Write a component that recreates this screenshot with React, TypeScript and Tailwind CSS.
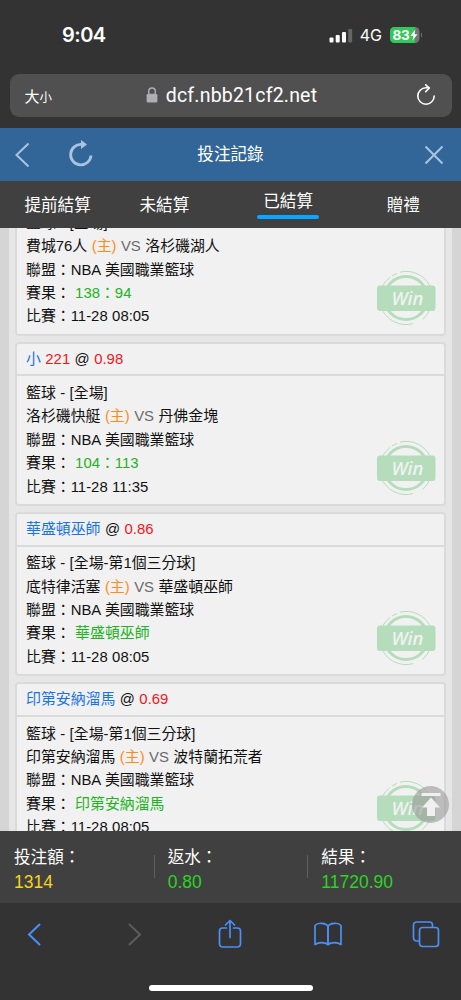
import type { ReactNode } from 'react'

type Bet = {
  pick?: ReactNode
  odds?: string
  market: string
  home: string
  away: string
  result: string
  date: string
}

const bets: Bet[] = [
  {
    market: '全場',
    home: '費城76人',
    away: '洛杉磯湖人',
    result: '138：94',
    date: '11-28 08:05',
  },
  {
    pick: (
      <>
        小 <span className="text-[#f5141c]">221</span>
      </>
    ),
    odds: '0.98',
    market: '全場',
    home: '洛杉磯快艇',
    away: '丹佛金塊',
    result: '104：113',
    date: '11-28 11:35',
  },
  {
    pick: '華盛頓巫師',
    odds: '0.86',
    market: '全場-第1個三分球',
    home: '底特律活塞',
    away: '華盛頓巫師',
    result: '華盛頓巫師',
    date: '11-28 08:05',
  },
  {
    pick: '印第安納溜馬',
    odds: '0.69',
    market: '全場-第1個三分球',
    home: '印第安納溜馬',
    away: '波特蘭拓荒者',
    result: '印第安納溜馬',
    date: '11-28 08:05',
  },
]

const totals = [
  { label: '投注額：', value: '1314', className: 'text-[#f5d51f]' },
  { label: '返水：', value: '0.80', className: 'text-[#2bd422]' },
  { label: '結果：', value: '11720.90', className: 'text-[#2bd422]' },
]

function StatusBar() {
  return (
    <div className="flex h-[74px] items-center justify-between pb-[5px] pl-[62px] pr-[38px] font-['Inter',sans-serif] text-white">
      <span className="text-[20px] font-semibold tracking-[-0.5px]">9:04</span>
      <div className="flex items-center">
        <svg width="24" height="16" viewBox="0 0 24 16" fill="#fff">
          <rect x="0.5" y="10.5" width="4" height="5" rx="1" />
          <rect x="6.7" y="8" width="4" height="7.5" rx="1" />
          <rect x="13" y="5" width="4" height="10.5" rx="1" />
          <rect x="19.2" y="2" width="4" height="13.5" rx="1" fill="#666" />
        </svg>
        <span className="ml-[7px] text-[16px] leading-4">4G</span>
        <svg className="ml-[8px]" width="33" height="16" viewBox="0 0 33 16">
          <rect width="29.5" height="16" rx="4.5" fill="#737373" />
          <path d="M4.5 0H25v16H4.5A4.5 4.5 0 0 1 0 11.5v-7A4.5 4.5 0 0 1 4.5 0z" fill="#34c759" />
          <path d="M31 5.5c1.3.6 1.3 4.400 0 5z" fill="#737373" />
          <text x="2.5" y="12.8" fontSize="13.5" fontWeight="700" fill="#fff" letterSpacing="-0.2">83</text>
          <path d="M25.4 2.5l-5 6.300h3l-1 5 5-6.500h-3z" fill="#fff" />
        </svg>
      </div>
    </div>
  )
}

function AddressBar() {
  return (
    <div className="mx-[9.5px] flex h-[42.5px] items-center justify-between rounded-[9px] bg-[#505050] px-[15px] text-white">
      <span className="w-[44px] whitespace-nowrap font-['Noto_Sans_CJK_TC',sans-serif] text-[15px] leading-none">
        大<span className="text-[12.5px]">小</span>
      </span>
      <div className="flex items-center pl-[2px]">
        <svg width="12" height="16" viewBox="0 0 12 16">
          <path d="M2.7 8V4.300a3.300 3.300 0 0 1 6.600 0V8" fill="none" stroke="#aeaeb4" strokeWidth="1.4" />
          <rect x="0.6" y="6.8" width="10.8" height="8.7" rx="1.5" fill="#aeaeb4" />
        </svg>
        <span className="ml-[8px] pt-px font-['Roboto',sans-serif] text-[19.5px] leading-6 tracking-[0.2px]">dcf.nbb21cf2.net</span>
      </div>
      <svg className="ml-[23px] mr-px" width="20" height="22" viewBox="0 0 20 22" fill="none" stroke="#fff" strokeWidth="1.6" strokeLinecap="round" strokeLinejoin="round">
        <path d="M18.2 12A8.200 8.200 0 1 1 10 3.800h3" />
        <path d="M9.700 .8l3.600 3.200-3.600 3.600" />
      </svg>
    </div>
  )
}

function TitleBar() {
  return (
    <div className="flex h-[53px] items-center justify-between bg-[#326699] pl-[14px] pr-[17px]">
      <svg width="80" height="30" viewBox="0 0 80 30" fill="none" stroke="#a9c4e0">
        <path d="M14.500 3.500L2.500 15l12 11.500" strokeWidth="2" />
        <path d="M77 15.500A10.200 10.200 0 1 1 68 4.500" strokeWidth="2.8" />
        <path d="M67 0l6 4.500-6 4.500z" fill="#a9c4e0" stroke="none" />
      </svg>
      <span className="pt-[2px] text-[16.6px] text-white">投注記錄</span>
      <div className="flex w-[77px] justify-end">
        <svg width="20" height="20" viewBox="0 0 20 20" stroke="#a9c4e0" strokeWidth="2">
          <path d="M1.500 1.500l17 17M18.500 1.500l-17 17" />
        </svg>
      </div>
    </div>
  )
}

function Tabs() {
  return (
    <div className="grid h-[47px] grid-cols-4 bg-[#404040] text-center text-[16.6px] leading-6 text-white">
      <span className="pt-[13px]">提前結算</span>
      <span className="pr-[17px] pt-[13px]">未結算</span>
      <div className="flex flex-col items-center pt-[9px]">
        <span>已結算</span>
        <span className="mt-px h-[4px] w-[62px] rounded-full bg-[#0aa5ff]" />
      </div>
      <span className="pt-[13px]">贈禮</span>
    </div>
  )
}

function WinBadge() {
  return (
    <svg className="absolute bottom-[8px] right-[8px]" width="60" height="56" viewBox="0 0 60 56">
      <g fill="none" stroke="#b5ddbc">
        <circle cx="30" cy="28" r="21.5" strokeWidth="3" />
        <path d="M24 2.200A26.500 26.500 0 0 1 54 16" strokeWidth="1" />
        <path d="M46.500 49.500A26.500 26.500 0 0 0 54 39" strokeWidth="1" />
        <path d="M37 53.600A26.500 26.500 0 0 1 5 37" strokeWidth="1" />
        <path d="M6 17a26.500 26.500 0 0 1 8-9.500M16 6l5-2.600" strokeWidth="1" />
      </g>
      <rect x="1" y="15.5" width="58.5" height="25.5" rx="3" fill="#b5ddbc" />
      <text className="font-['Noto_Sans',sans-serif] italic" x="31.5" y="35" textAnchor="middle" fontSize="18.5" fontWeight="500" fill="#f2f2f2">Win</text>
    </svg>
  )
}

function BetCard({ bet }: { bet: Bet }) {
  return (
    <div className="relative mb-[6.3px] rounded-[4px] border-2 border-[#dadada] bg-[#f1f1f1] pb-[5px] text-[14.9px] text-[#111] [word-spacing:0.3px]">
      {bet.pick && (
        <div className="h-[32.4px] border-b-2 border-[#dadada] pl-[9px] leading-[31px]">
          <span className="text-[#1a73e8]">{bet.pick}</span> @ <span className="text-[#f5141c]">{bet.odds}</span>
        </div>
      )}
      <div className="h-[122.6px] pl-[9px] pt-[5.7px] leading-[23.4px]">
        <p>籃球 - [{bet.market}]</p>
        <p>
          {bet.home} <span className="text-[#ff8c1a]">(主)</span> <span className="text-[#6b6b6b]">VS</span> {bet.away}
        </p>
        <p>聯盟：NBA 美國職業籃球</p>
        <p>
          賽果： <span className="text-[#22b322]">{bet.result}</span>
        </p>
        <p>比賽：{bet.date}</p>
      </div>
      <WinBadge />
    </div>
  )
}

function Totals() {
  return (
    <div className="flex h-[72px] bg-[#404040]">
      {totals.map((t, i) => (
        <div key={t.label} className="relative w-1/3 pl-[14px] pt-[15px]">
          {i > 0 && <span className="absolute left-0 top-[24px] h-[23px] w-px bg-[#606060]" />}
          <p className="text-[16.6px] leading-6 text-white">{t.label}</p>
          <p className={`text-[17.5px] leading-6 ${t.className}`}>{t.value}</p>
        </div>
      ))}
    </div>
  )
}

function Toolbar() {
  return (
    <div className="flex flex-1 flex-col items-center bg-[#333333]">
      <div className="flex w-full justify-between pl-[19.5px] pr-[21.5px] pt-[16px] text-[#4a90f7]">
        <svg width="28" height="30" viewBox="0 0 28 30" fill="none" stroke="currentColor" strokeWidth="2" strokeLinecap="round">
          <path d="M19.500 5.500L9 15.500l10.500 10" />
        </svg>
        <svg width="28" height="30" viewBox="0 0 28 30" fill="none" stroke="#5c5c5c" strokeWidth="2" strokeLinecap="round">
          <path d="M11.500 5.500l10.500 10-10.500 10" />
        </svg>
        <svg width="28" height="30" viewBox="0 0 28 30" fill="none" stroke="currentColor" strokeWidth="1.7" strokeLinecap="round" strokeLinejoin="round">
          <path d="M10.500 9H6.500a3 3 0 0 0-3 3v13a3 3 0 0 0 3 3h15a3 3 0 0 0 3-3V12a3 3 0 0 0-3-3h-4" />
          <path d="M14 18.500V1.500M9.500 6L14 1.500 18.500 6" />
        </svg>
        <svg width="28" height="30" viewBox="0 0 28 30" fill="none" stroke="currentColor" strokeWidth="1.7" strokeLinejoin="round">
          <path d="M14 7C12 4.200 4 2.800 1 6.500v19c3.500-2.500 10-2.500 13 0z" />
          <path d="M14 7c2-2.800 10-4.200 13-.5v19c-3.500-2.500-10-2.500-13 0z" />
        </svg>
        <svg width="28" height="30" viewBox="0 0 28 30" fill="none" stroke="currentColor" strokeWidth="1.7">
          <path d="M7.500 22H4.500a3 3 0 0 1-3-3V6a3 3 0 0 1 3-3h13a3 3 0 0 1 3 3v2.500" />
          <rect x="7.5" y="8.5" width="19" height="19" rx="3" />
        </svg>
      </div>
      <div className="mb-[9px] mt-auto h-[6px] w-[164px] rounded-full bg-white" />
    </div>
  )
}

export default function App() {
  return (
    <div className="flex h-[1000px] w-[461px] flex-col overflow-hidden bg-[#333333] font-['Liberation_Sans','Noto_Sans_CJK_TC',sans-serif]">
      <StatusBar />
      <AddressBar />
      <div className="mt-[11.5px]">
        <TitleBar />
      </div>
      <Tabs />

      <div className="relative h-[603px] overflow-hidden bg-[#d5d5d5] px-[9px]">
        <div className="h-full bg-[#e6e6e6] px-[6px]">
          <div className="-translate-y-[24px]">
            {bets.map((bet) => (
              <BetCard key={bet.home} bet={bet} />
            ))}
          </div>
        </div>

        {/* Back to top */}
        <div className="absolute bottom-[8px] right-[12px] flex size-[37px] items-center justify-center rounded-full bg-[#999]/60">
          <svg width="22" height="24" viewBox="0 0 22 24" fill="#f0f0f0">
            <path d="M1.500 0h19v3h-19zM11 4.500l9 10h-5V23H7v-8.500H2z" />
          </svg>
        </div>
      </div>

      <Totals />
      <Toolbar />
    </div>
  )
}
